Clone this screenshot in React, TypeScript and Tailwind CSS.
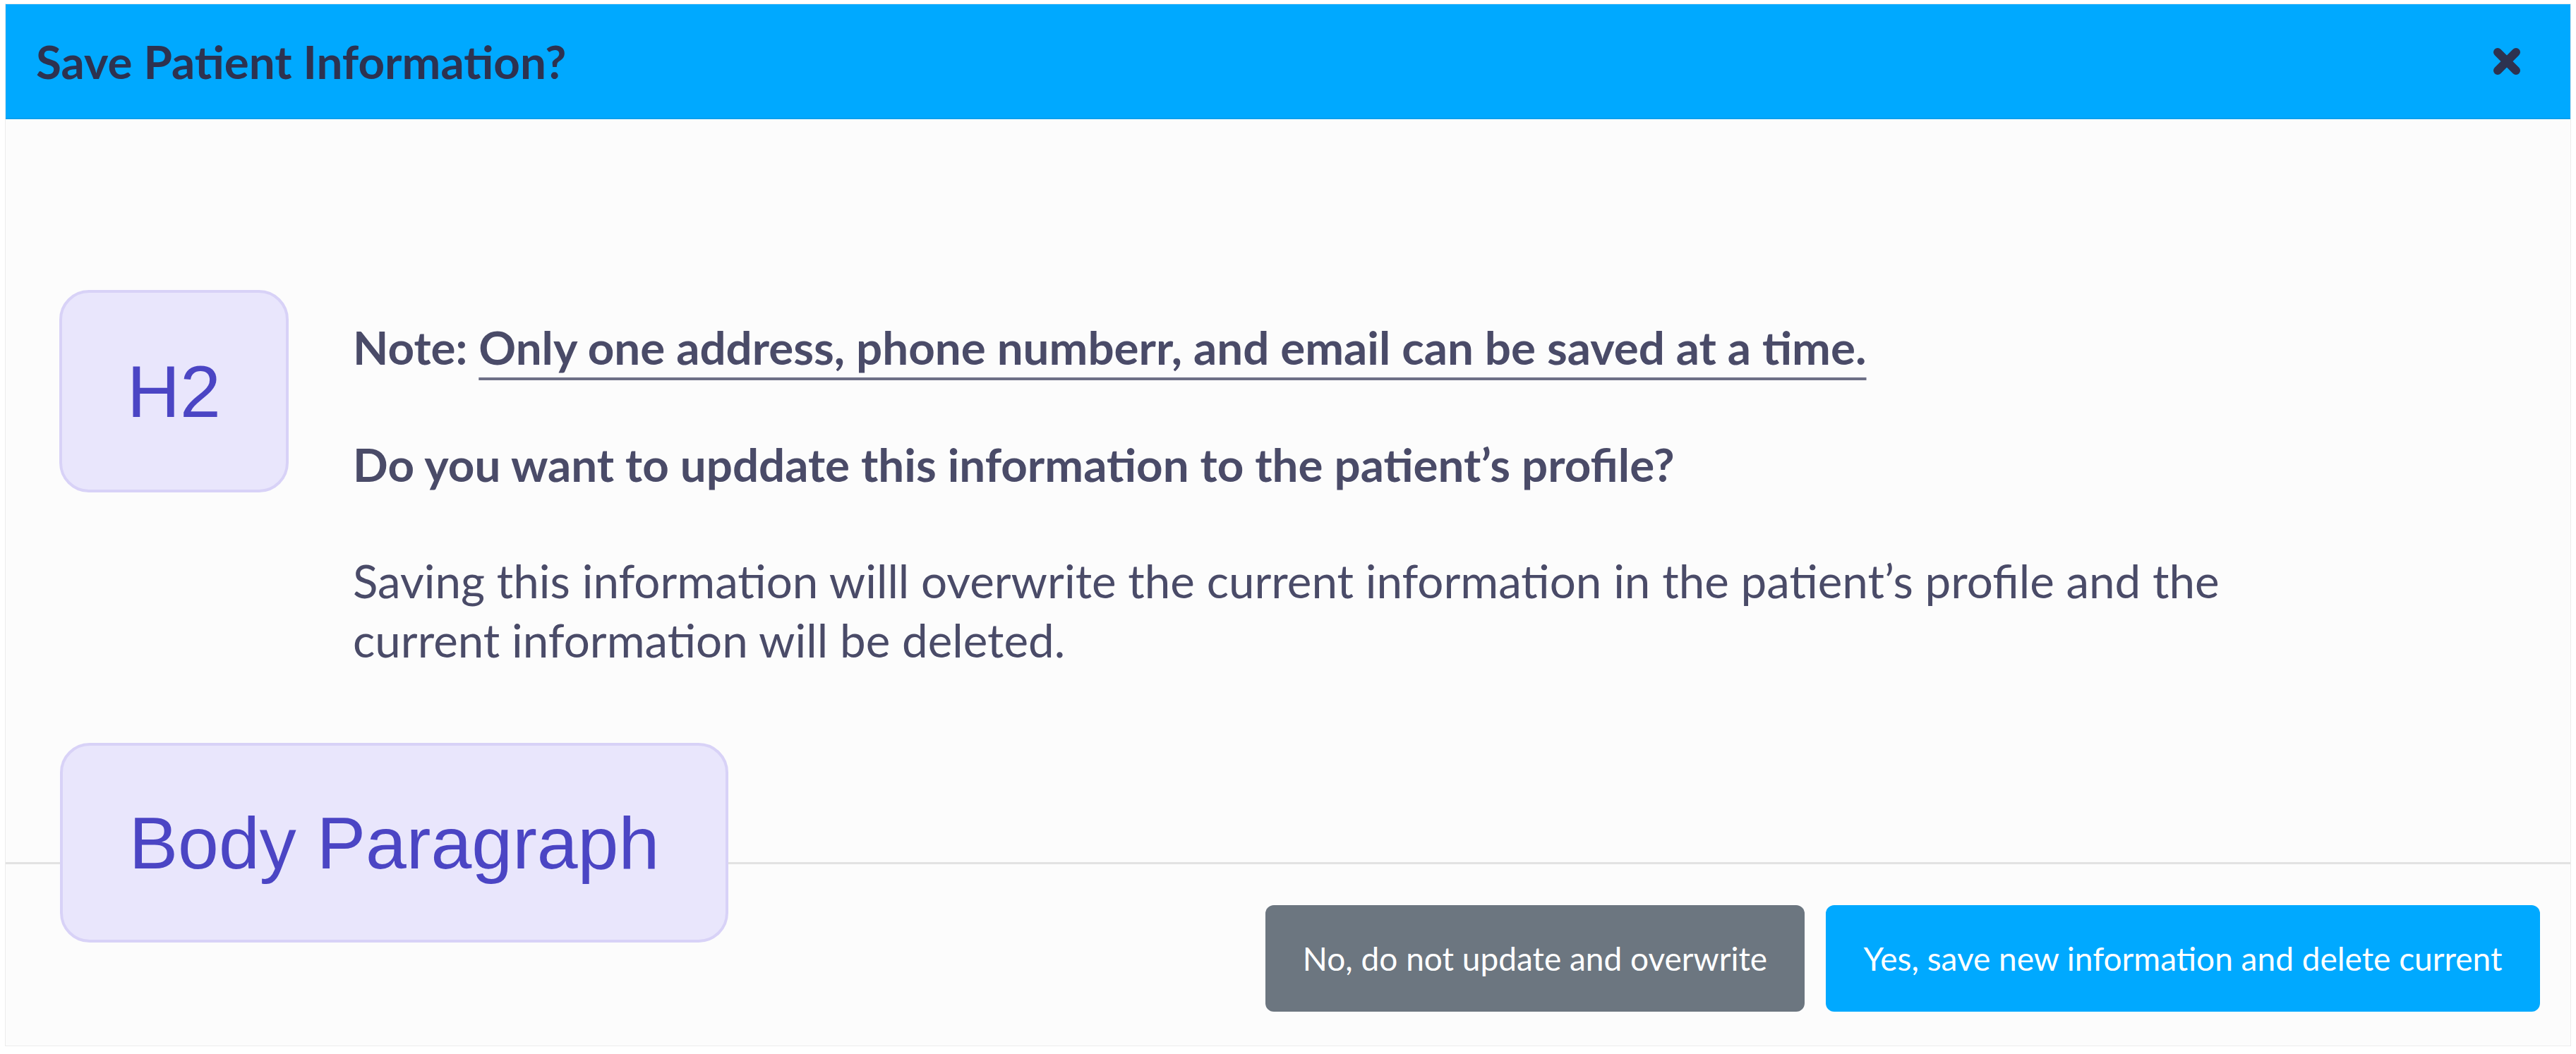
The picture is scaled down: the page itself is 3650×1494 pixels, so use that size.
import React from "react";

function CloseIcon() {
  return (
    <svg width="44" height="44" viewBox="0 0 44 44" aria-hidden="true">
      <path d="M9 9 L35 35 M35 9 L9 35" stroke="#2d3250" strokeWidth="12" strokeLinecap="round" fill="none" />
    </svg>
  );
}

export default function App() {
  return (
    <div className="w-[3650px] h-[1494px] bg-white pt-[5px] pl-[7px] font-['Lato',_sans-serif]">
      <div className="relative w-[3636px] h-[1478px] bg-[#fcfcfc] border border-[#ececec] flex flex-col">
        <div className="h-[163px] bg-[#00a9ff] flex items-center justify-between pl-[43px] pr-[68px] border-b-[2px] border-[#0aa0ee]">
          <h1 className="text-[65.5px] font-bold text-[#2d3250] leading-none">Save Patient Information?</h1>
          <CloseIcon />
        </div>

        <div className="pl-[492px] pt-[283px] text-[#4a4b68] text-[65.5px] leading-[80px]">
          <p className="font-bold">
            Note:{" "}
            <span className="underline decoration-[4px] underline-offset-[18px] decoration-[#6d6f86]">
              Only one address, phone numberr, and email can be saved at a time.
            </span>
          </p>
          <p className="font-bold mt-[86px]">Do you want to upddate this information to the patient’s profile?</p>
          <p className="mt-[83px] leading-[84px] w-[2720px]">
            Saving this information willl overwrite the current information in the patient’s profile and the current information will be deleted.
          </p>
        </div>

        <div className="mt-auto border-t-[3px] border-[#e2e2e2] pt-[58px] pb-[48px] pr-[43px] flex justify-end gap-[30px]">
          <button className="w-[764px] h-[151px] rounded-[12px] bg-[#6c7680] text-white text-[46px] flex items-center justify-center">
            No, do not update and overwrite
          </button>
          <button className="w-[1012px] h-[151px] rounded-[12px] bg-[#00a9ff] text-white text-[46px] flex items-center justify-center">
            Yes, save new information and delete current
          </button>
        </div>

        <div className="absolute left-[76px] top-[405px] w-[325px] h-[287px] rounded-[42px] border-[4px] border-[#d8d2f7] bg-[#e9e6fc] flex items-center justify-center">
          <span className="font-['Liberation_Sans',_Arial,_sans-serif] text-[104px] text-[#4b45c4] leading-none">H2</span>
        </div>
        <div className="absolute left-[77px] top-[1047px] w-[947px] h-[283px] rounded-[42px] border-[4px] border-[#d8d2f7] bg-[#e9e6fc] flex items-center justify-center">
          <span className="font-['Liberation_Sans',_Arial,_sans-serif] text-[104px] text-[#4b45c4] leading-none">Body Paragraph</span>
        </div>
      </div>
    </div>
  );
}
